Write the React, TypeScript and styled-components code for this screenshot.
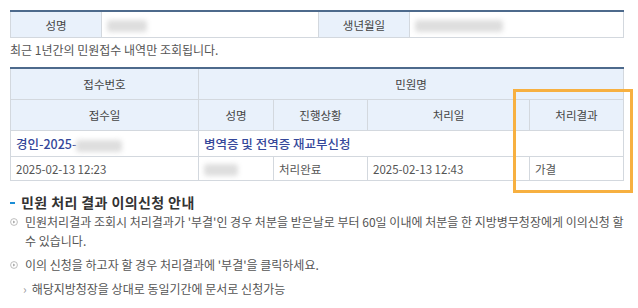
import React from "react";
import styled, { createGlobalStyle } from "styled-components";

const GlobalStyle = createGlobalStyle`
  body {
    margin: 0;
    background: #fff;
    font-family: "Noto Sans CJK KR", "Noto Sans", sans-serif;
    color: #555;
  }
`;

const Page = styled.div`
  width: 614px;
  padding: 10px 14px 0 10px;
`;

const Table = styled.table`
  width: 100%;
  border-collapse: collapse;
  table-layout: fixed;
  border-top: 2px solid #4d6a8c;
  font-size: 11.5px;
`;

const HeadCell = styled.th<{ $h?: number }>`
  height: ${(p) => p.$h ?? 25}px;
  padding: 0;
  background: #e9f1fb;
  border: 1px solid #d3d8de;
  border-top: none;
  color: #444;
  font-weight: 400;
  text-align: center;
`;

const Cell = styled.td<{ $h?: number; $link?: boolean }>`
  height: ${(p) => p.$h ?? 25}px;
  padding: 0 5px;
  border: 1px solid #d3d8de;
  border-top: none;
  color: ${(p) => (p.$link ? "#34479a" : "#555")};
  font-size: ${(p) => (p.$link ? 12.5 : 11.5)}px;
  font-weight: ${(p) => (p.$link ? 500 : 400)};
  white-space: nowrap;
  overflow: hidden;
`;

const Blur = styled.span<{ $w: number }>`
  display: inline-block;
  vertical-align: middle;
  width: ${(p) => p.$w}px;
  height: 12px;
  background: #dedede;
  border-radius: 3px;
  filter: blur(2.5px);
`;

const Note = styled.p`
  margin: 4px 0 0;
  font-size: 12px;
  line-height: 16px;
  color: #555;
`;

const ResultArea = styled.div`
  position: relative;
  margin-top: 9px;
`;

const Highlight = styled.div`
  position: absolute;
  left: 503px;
  top: 22px;
  width: 114px;
  height: 98px;
  border: 3px solid #f7b040;
  pointer-events: none;
`;

const Guide = styled.section`
  margin-top: 12px;
`;

const Heading = styled.h3`
  display: flex;
  align-items: center;
  gap: 6px;
  margin: 0;
  font-size: 14px;
  line-height: 19px;
  font-weight: 700;
  color: #333;
  letter-spacing: 0.4px;
`;

const Dash = styled.span`
  width: 5px;
  height: 2px;
  background: #1c8ed6;
`;

const List = styled.ul`
  list-style: none;
  margin: 0;
  padding: 0;
`;

const Item = styled.li`
  display: flex;
  gap: 7px;
  margin-bottom: 5px;
  font-size: 12px;
  line-height: 19px;
  color: #555;
`;

const Marker = styled.span`
  flex: none;
  display: flex;
  padding-top: 6px;
`;

const SubItem = styled.li`
  display: flex;
  gap: 5px;
  margin-top: 2px;
  padding-left: 13px;
  font-size: 12px;
  line-height: 19px;
  color: #555;
`;

const SubMarker = styled.span`
  color: #999;
`;

const CircleArrow = () => (
  <svg width="8" height="8" viewBox="0 0 8 8">
    <circle cx="4" cy="4" r="3.4" fill="none" stroke="#b5b5b5" strokeWidth="0.9" />
    <path d="M3.2 2.5 L5.2 4 L3.2 5.5 Z" fill="#9a9a9a" />
  </svg>
);

export default function App() {
  return (
    <Page>
      <GlobalStyle />
      <Table>
        <colgroup>
          <col style={{ width: 91 }} />
          <col style={{ width: 217 }} />
          <col style={{ width: 91 }} />
          <col />
        </colgroup>
        <tbody>
          <tr>
            <HeadCell>성명</HeadCell>
            <Cell>
              <Blur $w={40} />
            </Cell>
            <HeadCell>생년월일</HeadCell>
            <Cell>
              <Blur $w={88} />
            </Cell>
          </tr>
        </tbody>
      </Table>
      <Note>최근 1년간의 민원접수 내역만 조회됩니다.</Note>

      <ResultArea>
        <Table>
          <colgroup>
            <col style={{ width: 188 }} />
            <col style={{ width: 75 }} />
            <col style={{ width: 94 }} />
            <col style={{ width: 162 }} />
            <col />
          </colgroup>
          <thead>
            <tr>
              <HeadCell $h={30}>접수번호</HeadCell>
              <HeadCell $h={30} colSpan={4}>
                민원명
              </HeadCell>
            </tr>
            <tr>
              <HeadCell $h={30}>접수일</HeadCell>
              <HeadCell $h={30}>성명</HeadCell>
              <HeadCell $h={30}>진행상황</HeadCell>
              <HeadCell $h={30}>처리일</HeadCell>
              <HeadCell $h={30}>처리결과</HeadCell>
            </tr>
          </thead>
          <tbody>
            <tr>
              <Cell $link>
                경인-2025-
                <Blur $w={46} />
              </Cell>
              <Cell $link colSpan={4}>
                병역증 및 전역증 재교부신청
              </Cell>
            </tr>
            <tr>
              <Cell $h={23}>2025-02-13 12:23</Cell>
              <Cell $h={23}>
                <Blur $w={34} />
              </Cell>
              <Cell $h={23}>처리완료</Cell>
              <Cell $h={23}>2025-02-13 12:43</Cell>
              <Cell $h={23}>가결</Cell>
            </tr>
          </tbody>
        </Table>
        <Highlight />
      </ResultArea>

      <Guide>
        <Heading>
          <Dash />
          민원 처리 결과 이의신청 안내
        </Heading>
        <List>
          <Item>
            <Marker>
              <CircleArrow />
            </Marker>
            <span>
              민원처리결과 조회시 처리결과가 '부결'인 경우 처분을 받은날로 부터 60일 이내에 처분을 한
              지방병무청장에게 이의신청 할 수 있습니다.
            </span>
          </Item>
          <Item>
            <Marker>
              <CircleArrow />
            </Marker>
            <span>이의 신청을 하고자 할 경우 처리결과에 '부결'을 클릭하세요.</span>
          </Item>
          <SubItem>
            <SubMarker>›</SubMarker>
            해당지방청장을 상대로 동일기간에 문서로 신청가능
          </SubItem>
        </List>
      </Guide>
    </Page>
  );
}
